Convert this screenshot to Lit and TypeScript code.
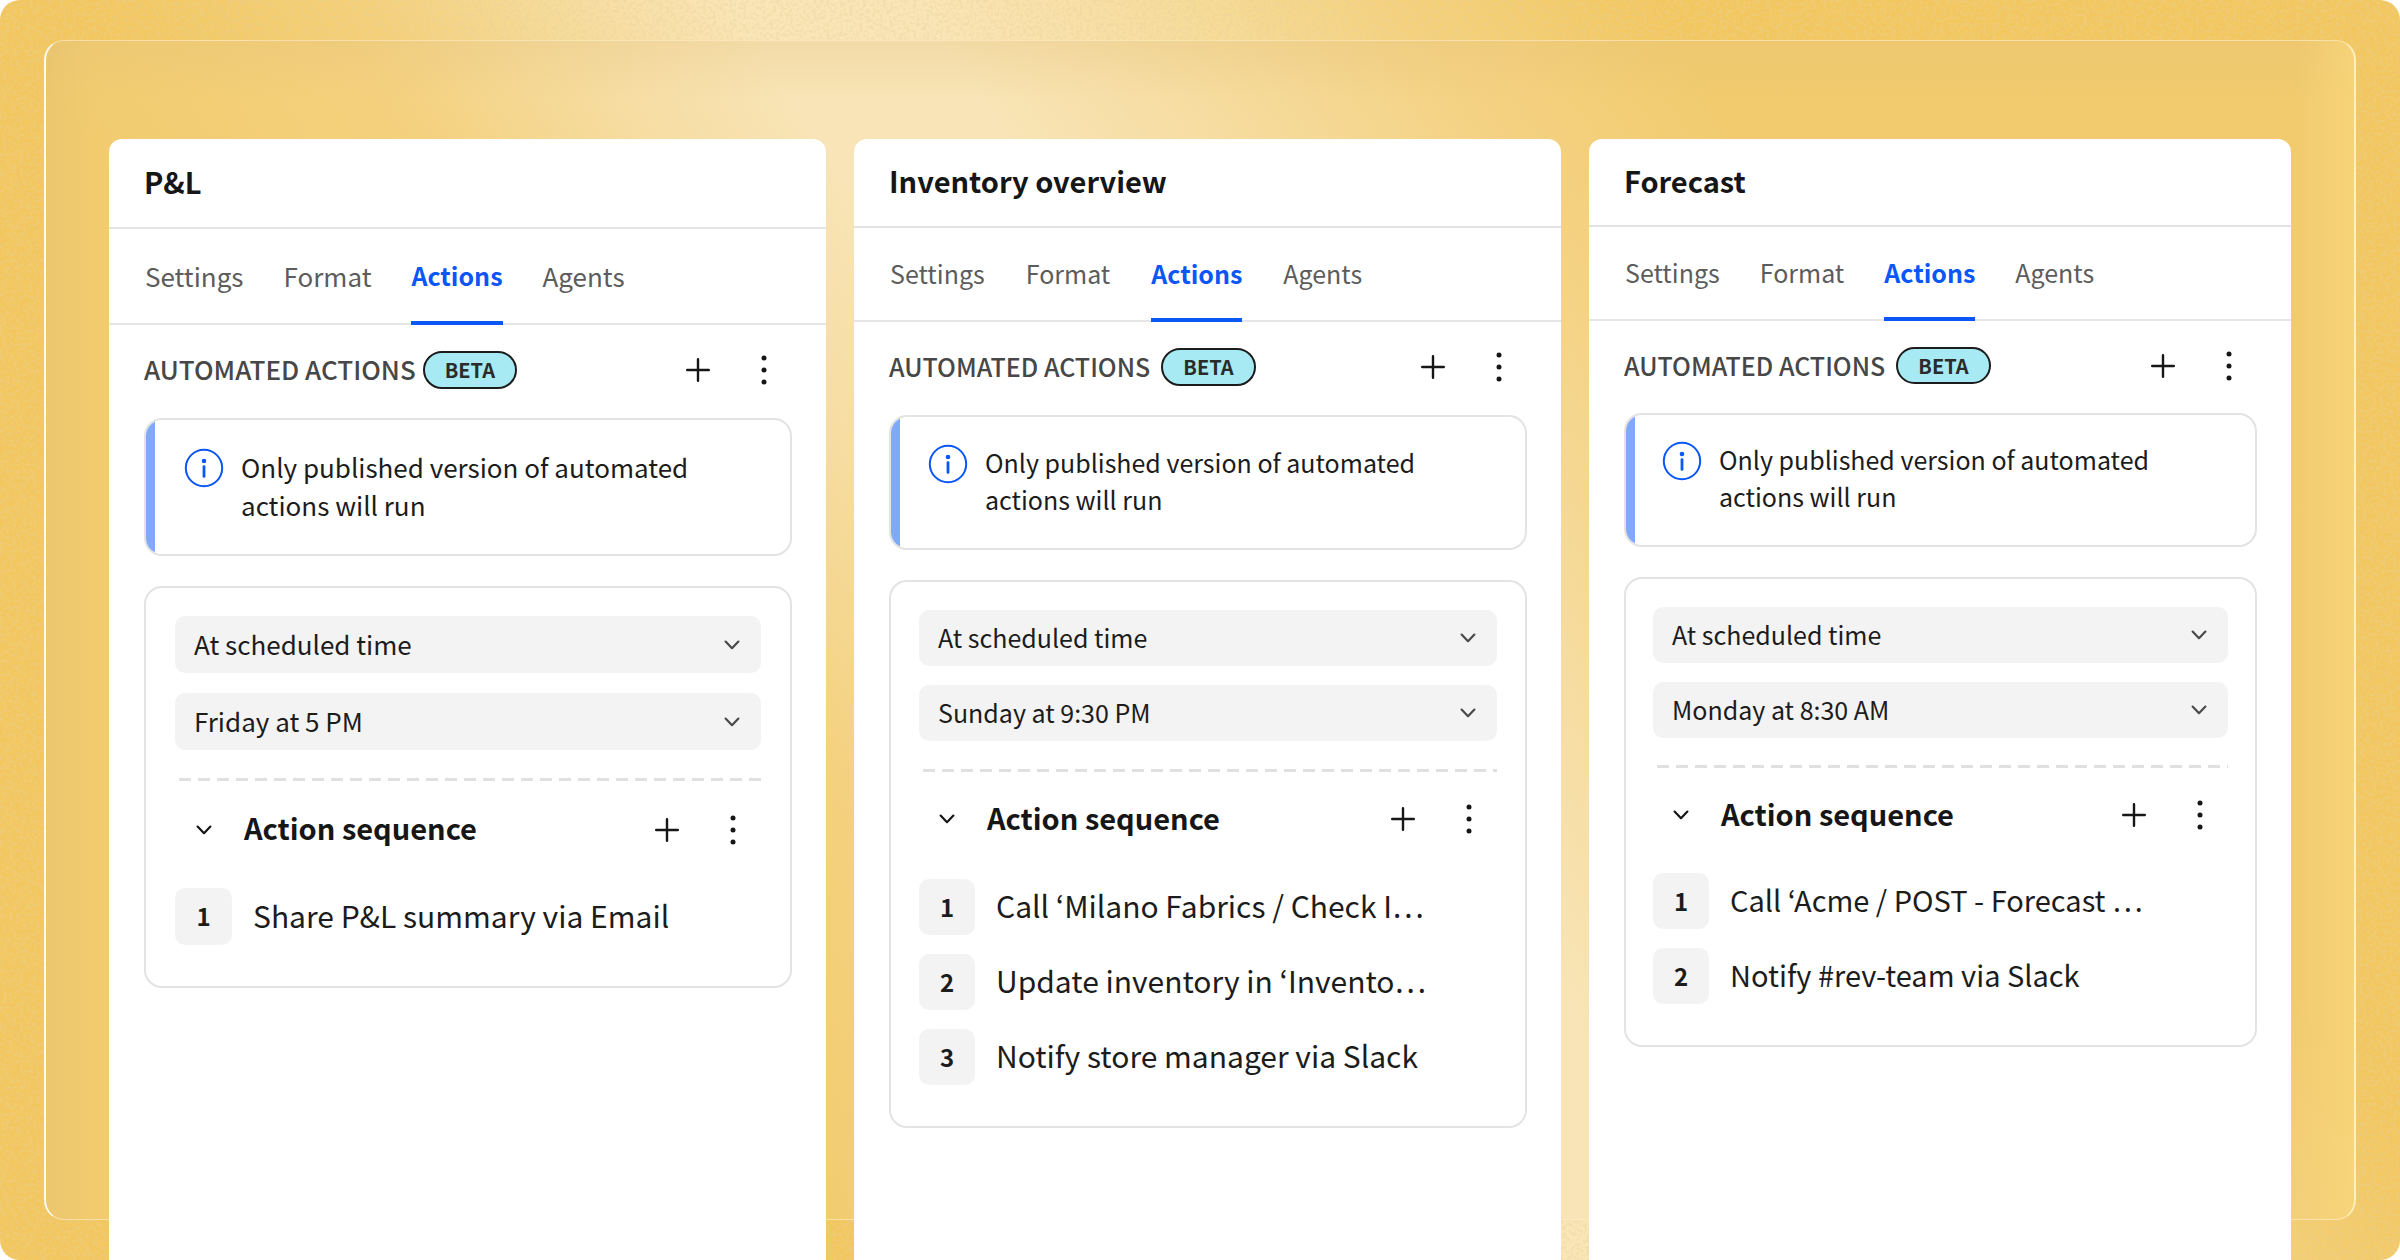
import { LitElement, html, svg, css } from "lit";
import { customElement, property } from "lit/decorators.js";
import { classMap } from "lit/directives/class-map.js";

interface PanelData {
  title: string;
  size: "large" | "medium" | "small";
  times: string[];
  steps: string[];
}

const PANELS: PanelData[] = [
  {
    title: "P&L",
    size: "large",
    times: ["Friday at 5 PM"],
    steps: ["Share P&L summary via Email"],
  },
  {
    title: "Inventory overview",
    size: "medium",
    times: ["Sunday at 9:30 PM"],
    steps: [
      "Call ‘Milano Fabrics / Check I…",
      "Update inventory in ‘Invento…",
      "Notify store manager via Slack",
    ],
  },
  {
    title: "Forecast",
    size: "small",
    times: ["Monday at 8:30 AM"],
    steps: ["Call ‘Acme / POST - Forecast …", "Notify #rev-team via Slack"],
  },
];

const TABS = ["Settings", "Format", "Actions", "Agents"];

const icon = (size: number, body: unknown) => html`<svg
  width=${size}
  height=${size}
  viewBox="0 0 ${size} ${size}"
  fill="none"
  aria-hidden="true"
>${body}</svg>`;

const plusIcon = () =>
  icon(24, svg`<path d="M12 1.2V22.8M1.2 12H22.8" stroke="#161616" stroke-width="2.4" stroke-linecap="round"/>`);

const dotsIcon = () =>
  icon(30, svg`<g fill="#161616"><circle cx="15" cy="3" r="2.5"/><circle cx="15" cy="15" r="2.5"/><circle cx="15" cy="27" r="2.5"/></g>`);

const chevronIcon = (color: string) =>
  icon(20, svg`<path d="M3.6 6.6L10 13.2L16.4 6.6" stroke=${color} stroke-width="2.2" stroke-linecap="round" stroke-linejoin="round"/>`);

const infoIcon = () =>
  icon(40, svg`<circle cx="20" cy="20" r="18.2" stroke="#0a57f5" stroke-width="2"/><circle cx="20" cy="13" r="2.3" fill="#0a57f5"/><path d="M20 18.6V28.4" stroke="#0a57f5" stroke-width="2.8" stroke-linecap="round"/>`);

@customElement("action-panel")
export class ActionPanel extends LitElement {
  @property({ attribute: false }) data!: PanelData;

  static styles = css`
    :host {
      display: block;
      min-width: 0;
    }
    * {
      box-sizing: border-box;
    }
    h2,
    h3,
    p,
    ol {
      margin: 0;
      padding: 0;
      font-weight: inherit;
    }
    button,
    select {
      font: inherit;
      color: inherit;
      border: 0;
      background: none;
      cursor: pointer;
    }
    svg {
      display: block;
      flex: none;
    }
    .panel {
      --text: 25px;
      --text-large: 29px;
      --header: 88px;
      --tabs: 94px;
      --tab-gap: 40px;
      --badge: 37px;
      --badge-gap: 11px;
      --inset: 27px;
      --notice-top: 26px;
      --line: 37px;
      --control: 56px;
      --gap: 19px;
      --rule-gap: 27px;
      --steps-gap: 30px;
      height: 100%;
      background: #fff;
      border-radius: 13px 13px 0 0;
      font-size: var(--text);
      color: #1c1c1c;
    }
    .panel.medium {
      --text-large: 30px;
      --header: 89px;
      --tab-gap: 41px;
      --badge: 38px;
      --inset: 28px;
      --notice-top: 27px;
      --rule-gap: 28px;
      --steps-gap: 32px;
    }
    .panel.large {
      --text: 26px;
      --text-large: 30px;
      --header: 90px;
      --tabs: 96px;
      --tab-gap: 40px;
      --badge: 38px;
      --badge-gap: 7px;
      --inset: 29px;
      --notice-top: 28px;
      --line: 38px;
      --control: 57px;
      --gap: 20px;
      --rule-gap: 28px;
    }
    .header {
      height: var(--header);
      padding: 0 35px 5px;
      border-bottom: 2px solid #e3e3e3;
      display: flex;
      align-items: center;
    }
    .title {
      font-size: 29px;
      font-weight: 700;
      line-height: 40px;
      color: #161616;
    }
    .tabs {
      height: var(--tabs);
      padding: 0 36px;
      border-bottom: 2px solid #e6e6e6;
      display: flex;
      gap: var(--tab-gap);
    }
    .tab {
      padding: 0;
      margin-bottom: -2px;
      border-bottom: 4px solid transparent;
      color: #5c5c5c;
    }
    .tab.active {
      color: #0a57f5;
      border-color: #0a57f5;
      font-size: 25px;
      font-weight: 700;
    }
    .body {
      padding: 26px 34px 40px 35px;
    }
    .section {
      display: flex;
      align-items: center;
      height: var(--badge);
      margin-bottom: 29px;
    }
    .section-title {
      font-size: var(--text);
      font-weight: 500;
      line-height: 36px;
      padding-bottom: 2px;
      color: #474747;
      margin-right: var(--badge-gap);
    }
    .badge {
      height: var(--badge);
      padding: 0 20px;
      border: 2px solid #1c1c1c;
      border-radius: 19px;
      background: #a8eaf4;
      color: #2b2b2b;
      font-size: 20px;
      font-weight: 700;
      line-height: 34px;
    }
    .tools {
      margin-left: auto;
      display: flex;
      gap: 10px;
    }
    .tool {
      width: 56px;
      height: 38px;
      padding: 0;
      display: grid;
      place-items: center;
    }
    .notice {
      display: flex;
      border: 2px solid #e3e3e3;
      border-radius: 18px;
      overflow: hidden;
      margin-bottom: 30px;
    }
    .stripe {
      flex: none;
      width: 9px;
      background: #80a9f7;
    }
    .notice-body {
      display: flex;
      gap: 17px;
      padding: var(--notice-top) 32px 30px var(--inset);
      line-height: var(--line);
    }
    .card {
      border: 2px solid #e3e3e3;
      border-radius: 18px;
      padding: 28px var(--inset) 41px;
    }
    .fields {
      display: grid;
      gap: var(--gap);
    }
    .field {
      display: grid;
      align-items: center;
    }
    .field > * {
      grid-area: 1 / 1;
    }
    .field svg {
      justify-self: end;
      margin-right: 19px;
      pointer-events: none;
    }
    .select {
      appearance: none;
      width: 100%;
      height: var(--control);
      padding: 0 56px 2px 19px;
      border-radius: 10px;
      background: #f3f3f3;
    }
    .rule {
      height: 3px;
      margin: var(--rule-gap) 0 var(--gap) 4px;
      background: repeating-linear-gradient(90deg, #e0e0e0 0 12px, transparent 12px 19px);
    }
    .sequence {
      display: flex;
      align-items: center;
      height: var(--control);
      margin-bottom: var(--steps-gap);
    }
    .toggle {
      width: var(--control);
      height: var(--control);
      padding: 0;
      display: grid;
      place-items: center;
    }
    .sequence-title {
      padding: 0 0 5px 12px;
      font-size: 29px;
      font-weight: 700;
      line-height: 40px;
      color: #161616;
    }
    .steps {
      list-style: none;
      display: grid;
      gap: var(--gap);
    }
    .step {
      display: flex;
      align-items: center;
      gap: 21px;
      font-size: var(--text-large);
      white-space: nowrap;
    }
    .number {
      flex: none;
      width: var(--control);
      height: var(--control);
      padding-bottom: 2px;
      display: grid;
      place-items: center;
      border-radius: 10px;
      background: #f3f3f3;
      font-size: 24px;
      font-weight: 700;
    }
    .step-text {
      line-height: 40px;
      padding-bottom: 4px;
    }
  `;

  private tools() {
    return html`<div class="tools">
      <button class="tool" aria-label="Add">${plusIcon()}</button>
      <button class="tool" aria-label="More options">${dotsIcon()}</button>
    </div>`;
  }

  private field(label: string, value: string) {
    return html`<div class="field">
      <select class="select" aria-label=${label}>
        <option>${value}</option>
      </select>
      ${chevronIcon("#4a4a4a")}
    </div>`;
  }

  render() {
    const { title, size, times, steps } = this.data;
    return html`<section class="panel ${size}">
      <header class="header"><h2 class="title">${title}</h2></header>
      <nav class="tabs" role="tablist">
        ${TABS.map(
          (tab) => html`<button
            class=${classMap({ tab: true, active: tab === "Actions" })}
            role="tab"
            aria-selected=${tab === "Actions" ? "true" : "false"}
          >${tab}</button>`,
        )}
      </nav>
      <div class="body">
        <div class="section">
          <h3 class="section-title">AUTOMATED ACTIONS</h3>
          <span class="badge">BETA</span>
          ${this.tools()}
        </div>
        <div class="notice">
          <span class="stripe"></span>
          <div class="notice-body">
            ${infoIcon()}
            <p>Only published version of automated actions will run</p>
          </div>
        </div>
        <div class="card">
          <div class="fields">
            ${this.field("Trigger", "At scheduled time")}
            ${times.map((time) => this.field("Schedule", time))}
          </div>
          <div class="rule"></div>
          <div class="sequence">
            <button class="toggle" aria-label="Collapse sequence">${chevronIcon("#161616")}</button>
            <h3 class="sequence-title">Action sequence</h3>
            ${this.tools()}
          </div>
          <ol class="steps">
            ${steps.map(
              (step, i) => html`<li class="step">
                <span class="number">${i + 1}</span>
                <span class="step-text">${step}</span>
              </li>`,
            )}
          </ol>
        </div>
      </div>
    </section>`;
  }
}

@customElement("app-root")
export class AppRoot extends LitElement {
  static styles = css`
    :host {
      display: block;
      background: #fff;
      font-family: "Noto Sans CJK KR", "Noto Sans", sans-serif;
    }
    .stage {
      position: relative;
      box-sizing: border-box;
      min-height: 100vh;
      padding: 139px 109px 0;
      display: grid;
      border-radius: 20px;
      overflow: hidden;
      background: linear-gradient(
        57deg,
        #f3c75f 28%,
        #f4cf76 36%,
        #f6da98 42%,
        #fae5b6 48%,
        #fae5b6 54%,
        #f7dd9e 61%,
        #f4d17c 69%,
        #f3c75f 77%
      );
    }
    .grain {
      position: absolute;
      inset: 0;
      width: 100%;
      height: 100%;
    }
    .frame {
      position: absolute;
      inset: 40px 44px;
      box-sizing: border-box;
      border: 1px solid rgba(255, 240, 200, 0.6);
      border-left: 2px solid rgba(255, 255, 255, 0.9);
      border-right: 2px solid rgba(255, 246, 200, 0.85);
      border-radius: 20px;
      background:
        linear-gradient(90deg, rgba(225, 190, 110, 0.35), rgba(225, 190, 110, 0) 50px),
        linear-gradient(270deg, rgba(250, 215, 125, 0.7), rgba(250, 215, 125, 0) 60px),
        linear-gradient(180deg, rgba(225, 190, 120, 0.25), rgba(225, 190, 120, 0) 60px),
        linear-gradient(
          57deg,
          #f2cb6e 24%,
          #f4d17e 35%,
          #f6dca0 42%,
          #f8e4b6 48%,
          #f8e4b6 54%,
          #f6dca0 61%,
          #f4d283 70%,
          #f2cb6e 78%
        );
      background-origin: border-box;
    }
    .panels {
      position: relative;
      display: grid;
      grid-template-columns: 717fr 707fr 702fr;
      gap: 28px;
    }
  `;

  render() {
    return html`<main class="stage">
      <svg class="grain" aria-hidden="true">
        <filter id="grain" x="0" y="0" width="100%" height="100%">
          <feTurbulence type="fractalNoise" baseFrequency="0.3" numOctaves="2" seed="4" />
          <feColorMatrix values="0 0 0 0 0.8  0 0 0 0 0.64  0 0 0 0 0.34  8 0 0 0 -3.8" />
        </filter>
        <rect width="100%" height="100%" filter="url(#grain)" opacity="0.3" />
      </svg>
      <div class="frame"></div>
      <div class="panels">
        ${PANELS.map((panel) => html`<action-panel .data=${panel}></action-panel>`)}
      </div>
    </main>`;
  }
}
